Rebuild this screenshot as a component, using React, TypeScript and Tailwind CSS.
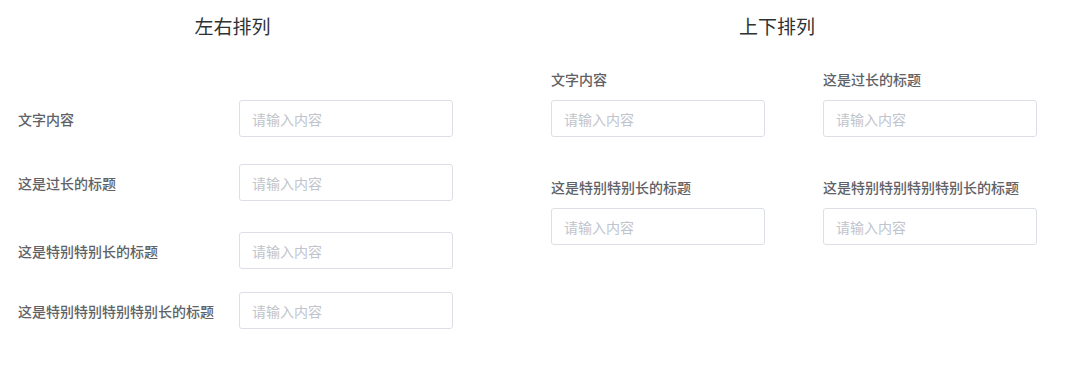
import React from "react";

const font = { fontFamily: '"Noto Sans CJK SC", "Noto Sans", sans-serif' };

function Input() {
  return (
    <div className="w-[214px] h-[37px] border border-[#dcdfe6] rounded-[3px] bg-white flex items-center pl-[12px] text-[14px] text-[#c0c4cc] leading-none shrink-0">
      请输入内容
    </div>
  );
}

function HRow({ label, mt }: { label: string; mt: string }) {
  return (
    <div className={`flex items-center ${mt}`}>
      <div className="w-[221px] text-[14px] text-[#606266] font-medium leading-[20px] whitespace-nowrap">
        {label}
      </div>
      <Input />
    </div>
  );
}

function VItem({ label }: { label: string }) {
  return (
    <div className="flex flex-col">
      <div className="text-[14px] text-[#606266] font-medium leading-[20px] whitespace-nowrap">
        {label}
      </div>
      <div className="mt-[11px]">
        <Input />
      </div>
    </div>
  );
}

export default function App() {
  return (
    <div className="w-[1080px] h-[383px] bg-white flex" style={font}>
      <div className="w-[465px] pl-[18px] pt-[13px]">
        <div className="text-center text-[19px] leading-[26px] text-[#303133] pl-[0px] -ml-[18px]">
          左右排列
        </div>
        <HRow label="文字内容" mt="mt-[61px]" />
        <HRow label="这是过长的标题" mt="mt-[27px]" />
        <HRow label="这是特别特别长的标题" mt="mt-[31px]" />
        <HRow label="这是特别特别特别特别长的标题" mt="mt-[23px]" />
      </div>
      <div className="ml-[86px] pt-[13px]">
        <div className="w-[452px] text-center text-[19px] leading-[26px] text-[#303133]">
          上下排列
        </div>
        <div className="mt-[30px] grid grid-cols-[214px_214px] gap-x-[58px] gap-y-[40px]">
          <VItem label="文字内容" />
          <VItem label="这是过长的标题" />
          <VItem label="这是特别特别长的标题" />
          <VItem label="这是特别特别特别特别长的标题" />
        </div>
      </div>
    </div>
  );
}
